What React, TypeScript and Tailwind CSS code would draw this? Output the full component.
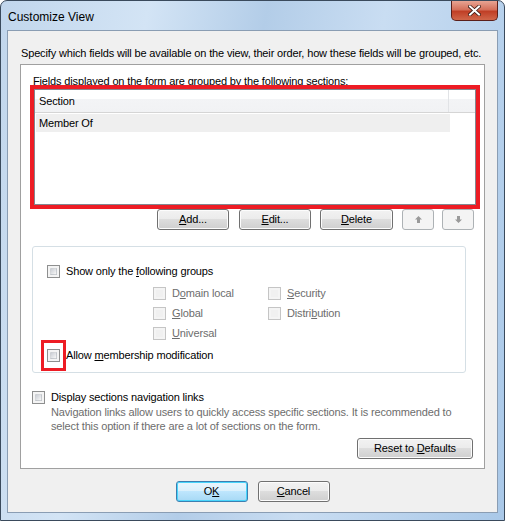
import type { ReactNode } from 'react'

const FONT = { fontFamily: '"Liberation Sans", Arial, sans-serif' }

function Checkbox({ disabled = false }: { disabled?: boolean }) {
  return (
    <span
      className={`inline-block w-[13px] h-[13px] shrink-0 border ${
        disabled ? 'border-[#c5c5c5] bg-[#f4f4f4]' : 'border-[#8e8f8f] bg-[#f4f4f4]'
      } p-[2px]`}
    >
      <span
        className={`block w-full h-full ${
          disabled
            ? 'bg-[#f0f0f0]'
            : 'bg-[linear-gradient(135deg,#cbcfd5,#f6f6f6)] border border-[#b0b4ba]/40'
        }`}
      />
    </span>
  )
}

function Btn({ children, className = '', disabled = false, def = false }: { children: ReactNode; className?: string; disabled?: boolean; def?: boolean }) {
  return (
    <div
      className={`flex items-center justify-center shrink-0 h-[21px] rounded-[3px] border ${
        disabled
          ? 'border-[#adb2b5] bg-[#f4f4f4]'
          : def
          ? 'border-[#3c7fb1] bg-[linear-gradient(#eaf6fd_0%,#d9f0fc_50%,#bee6fd_50%,#a7d9f5_100%)] shadow-[inset_0_0_0_1px_#48d5fb]'
          : 'border-[#707070] bg-[linear-gradient(#f2f2f2_0%,#ebebeb_50%,#dddddd_50%,#cfcfcf_100%)] shadow-[inset_0_0_0_1px_#fcfcfc]'
      } text-black ${className}`}
    >
      {children}
    </div>
  )
}

function Arrow({ up }: { up: boolean }) {
  return (
    <svg width="9" height="9" viewBox="0 0 9 9" className={up ? '' : 'rotate-180'}>
      <path d="M4.5 1 L8 4.5 L6 4.5 L6 8 L3 8 L3 4.5 L1 4.5 Z" fill="#9a9a9a" />
    </svg>
  )
}

function CheckRow({ label, disabled = false, className = '' }: { label: ReactNode; disabled?: boolean; className?: string }) {
  return (
    <div className={`flex items-center gap-[6px] h-[20px] ${className}`}>
      <Checkbox disabled={disabled} />
      <span className={disabled ? 'text-[#6d6d6d]' : 'text-black'}>{label}</span>
    </div>
  )
}

export default function App() {
  return (
    <div
      style={FONT}
      className="w-[505px] h-[521px] flex flex-col rounded-t-[7px] border border-[#3a4a5c] bg-[linear-gradient(100deg,#c1d6ec_0%,#d3e4f5_25%,#b3cde8_45%,#c9ddf2_65%,#a9c8e8_100%)] text-[11px] tracking-[-0.15px] overflow-hidden"
    >
      {/* title bar */}
      <div className="h-[29px] flex items-start shrink-0">
        <div className="pl-[7px] pt-[7px] text-[12px] tracking-normal text-black">Customize View</div>
        <div className="ml-auto mr-[6px] w-[47px] h-[20px] rounded-b-[5px] border border-[#5a1f1a] border-t-0 bg-[linear-gradient(#e8a493_0%,#d5705b_45%,#c03f26_55%,#d0664a_100%)] flex items-center justify-center">
          <svg width="13" height="11" viewBox="0 0 13 11">
            <path d="M2 1.5 L11 9.5 M11 1.5 L2 9.5" stroke="#3a1a14" strokeWidth="3.6" strokeLinecap="square" />
            <path d="M2 1.5 L11 9.5 M11 1.5 L2 9.5" stroke="#ffffff" strokeWidth="2" strokeLinecap="square" />
          </svg>
        </div>
      </div>

      {/* client area */}
      <div className="mx-[6px] mb-[7px] flex-1 border border-[#8a9db3] bg-[#f0f0f0] flex flex-col">
        <div className="pl-[13px] pt-[14px] h-[33px] shrink-0 text-black">
          Specify which fields will be available on the view, their order, how these fields will be grouped, etc.
        </div>

        {/* white panel */}
        <div className="mx-[12px] h-[405px] shrink-0 border border-[#a0a0a0] bg-white flex flex-col">
          <div className="pl-[12px] pt-[10px] h-[20px] shrink-0 leading-[13px] text-black">
            Fields displayed on the form are grouped by the following sections:
          </div>

          <div className="ml-[9px] w-[450px] h-[124px] shrink-0 border-4 border-[#ed1c24] bg-white">
            <div className="w-full h-full border border-[#828790] flex flex-col">
              <div className="flex h-[23px] shrink-0 border-b border-[#d5d5d5] bg-[linear-gradient(#ffffff_0%,#ffffff_40%,#f3f4f6_41%,#f1f2f4_100%)]">
                <div className="w-[414px] pl-[4px] flex items-center border-r border-[#e1e3e6]">Section</div>
                <div className="flex-1" />
              </div>
              <div className="w-[414px] h-[18px] shrink-0 mt-[1px] ml-[1px] bg-[#efefef] pl-[3px] flex items-center">Member Of</div>
            </div>
          </div>

          <div className="flex pl-[136px] h-[37px] shrink-0">
            <Btn className="w-[72px]"><span><u>A</u>dd...</span></Btn>
            <Btn className="w-[72px] ml-[10px]"><span><u>E</u>dit...</span></Btn>
            <Btn className="w-[73px] ml-[9px]"><span><u>D</u>elete</span></Btn>
            <Btn className="w-[32px] ml-[9px]" disabled><Arrow up /></Btn>
            <Btn className="w-[32px] ml-[8px]" disabled><Arrow up={false} /></Btn>
          </div>

          {/* group box */}
          <div className="ml-[11px] w-[434px] h-[127px] shrink-0 rounded-[3px] border border-[#d5dfe5] pt-[14px] pl-[14px]">
            <CheckRow label={<span>Show only the <u>f</u>ollowing groups</span>} />
            <div className="flex pl-[106px] pt-[2px]">
              <div className="w-[115px]">
                <CheckRow disabled label={<span>D<u>o</u>main local</span>} />
                <CheckRow disabled label={<span><u>G</u>lobal</span>} />
                <CheckRow disabled label={<span><u>U</u>niversal</span>} />
              </div>
              <div>
                <CheckRow disabled label={<span><u>S</u>ecurity</span>} />
                <CheckRow disabled label={<span>Distri<u>b</u>ution</span>} />
              </div>
            </div>
            <div className="flex items-center h-[20px] mt-[2px]">
              <span className="relative inline-flex">
                <Checkbox />
                <span className="absolute -left-[6px] -top-[9px] w-[25px] h-[31px] border-[3px] border-[#ed1c24]" />
              </span>
              <span className="ml-[6px]">Allow <u>m</u>embership modification</span>
            </div>
          </div>

          <div className="pl-[11px] pt-[14px] shrink-0">
            <CheckRow label="Display sections navigation links" />
            <div className="pl-[19px] -mt-[2px] text-[#6d6d6d] leading-[14px]">
              Navigation links allow users to quickly access specific sections. It is recommended to
              <br />
              select this option if there are a lot of sections on the form.
            </div>
            <div className="flex justify-end pr-[11px] pt-[5px]">
              <Btn className="w-[116px]"><span>Reset to <u>D</u>efaults</span></Btn>
            </div>
          </div>
        </div>

        <div className="flex justify-center gap-[10px] pt-[12px] shrink-0">
          <Btn className="w-[72px]" def><span>O<u>K</u></span></Btn>
          <Btn className="w-[72px]"><span><u>C</u>ancel</span></Btn>
        </div>
      </div>
    </div>
  )
}
